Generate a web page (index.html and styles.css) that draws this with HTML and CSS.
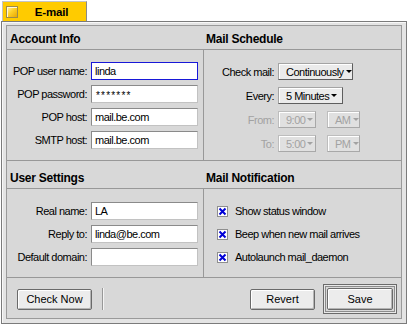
FILE: index.html
```html
<!DOCTYPE html>
<html lang="en">
<head>
    <meta charset="UTF-8">
    <title>E-mail</title>
    <link rel="stylesheet" href="styles.css">
</head>
<body>
    <div class="window">
        <!-- Title tab -->
        <div class="tab">
            <span class="close-box"></span>
            <span class="tab-title">E-mail</span>
        </div>

        <div class="frame">
            <div class="content">
                <div class="row row-top">
                    <section class="col">
                        <h2 class="col-head">Account Info</h2>
                        <div class="col-body form">
                            <label>POP user name:</label>
                            <div class="field focused">linda</div>
                            <label>POP password:</label>
                            <div class="field pw">*******</div>
                            <label>POP host:</label>
                            <div class="field">mail.be.com</div>
                            <label>SMTP host:</label>
                            <div class="field">mail.be.com</div>
                        </div>
                    </section>
                    <section class="col col-right">
                        <h2 class="col-head">Mail Schedule</h2>
                        <div class="col-body schedule">
                            <label>Check mail:</label>
                            <div class="popup w-cont">Continuously<i class="arrow"></i></div>
                            <label>Every:</label>
                            <div class="popup w-every">5 Minutes<i class="arrow"></i></div>
                            <label class="off">From:</label>
                            <div class="pair">
                                <div class="popup off w-time">9:00<i class="arrow"></i></div>
                                <div class="popup off w-ampm">AM<i class="arrow"></i></div>
                            </div>
                            <label class="off">To:</label>
                            <div class="pair">
                                <div class="popup off w-time">5:00<i class="arrow"></i></div>
                                <div class="popup off w-ampm">PM<i class="arrow"></i></div>
                            </div>
                        </div>
                    </section>
                </div>

                <div class="row row-bottom">
                    <section class="col">
                        <h2 class="col-head">User Settings</h2>
                        <div class="col-body form">
                            <label>Real name:</label>
                            <div class="field">LA</div>
                            <label>Reply to:</label>
                            <div class="field">linda@be.com</div>
                            <label>Default domain:</label>
                            <div class="field"></div>
                        </div>
                    </section>
                    <section class="col col-right">
                        <h2 class="col-head">Mail Notification</h2>
                        <div class="col-body checks">
                            <div class="check">
                                <svg width="11" height="11" viewBox="0 0 11 11"><rect x="0.5" y="0.5" width="10" height="10" fill="#fff" stroke="#8e8e8e"/><path d="M2.5 2.5L8.5 8.5M8.5 2.5L2.5 8.5" stroke="#0000d6" stroke-width="2"/></svg>
                                <span>Show status window</span>
                            </div>
                            <div class="check">
                                <svg width="11" height="11" viewBox="0 0 11 11"><rect x="0.5" y="0.5" width="10" height="10" fill="#fff" stroke="#8e8e8e"/><path d="M2.5 2.5L8.5 8.5M8.5 2.5L2.5 8.5" stroke="#0000d6" stroke-width="2"/></svg>
                                <span>Beep when new mail arrives</span>
                            </div>
                            <div class="check">
                                <svg width="11" height="11" viewBox="0 0 11 11"><rect x="0.5" y="0.5" width="10" height="10" fill="#fff" stroke="#8e8e8e"/><path d="M2.5 2.5L8.5 8.5M8.5 2.5L2.5 8.5" stroke="#0000d6" stroke-width="2"/></svg>
                                <span>Autolaunch mail_daemon</span>
                            </div>
                        </div>
                    </section>
                </div>

                <div class="actions">
                    <button class="btn w-check">Check Now</button>
                    <span class="vsep"></span>
                    <span class="spacer"></span>
                    <button class="btn w-revert">Revert</button>
                    <span class="default-ring"><span class="inner-ring"><button class="btn w-save">Save</button></span></span>
                </div>
            </div>
        </div>
    </div>
</body>
</html>
```

FILE: styles.css
```css
* {
    box-sizing: border-box;
}

body {
    margin: 0;
    background: #fff;
    font-family: "Liberation Sans", Arial, sans-serif;
    font-size: 11px;
    letter-spacing: -0.5px;
    color: #000;
}

.window {
    width: 408px;
    padding: 1px 0 0 1px;
}

/* yellow title tab */
.tab {
    display: flex;
    align-items: center;
    width: 85px;
    height: 20px;
    margin-left: 1px;
    padding-left: 3px;
    background: #ffcb00;
    border-top: 1px solid #c4c4c4;
    border-left: 1px solid #c4c4c4;
    border-right: 1px solid #8a8a8a;
}

.close-box {
    width: 12px;
    height: 12px;
    border: 1px solid #9c8b4a;
    background: linear-gradient(135deg, #fff1b0 0%, #ffd22a 45%, #e8a800 100%);
    box-shadow: inset 1px 1px 0 #fff8dc;
}

.tab-title {
    flex: 1;
    text-align: center;
    font-weight: bold;
    font-size: 11.5px;
    letter-spacing: -0.2px;
    padding-right: 1px;
}

.frame {
    width: 406px;
    height: 303px;
    border: 1px solid #7b7b7b;
    padding: 3px 4px 4px 4px;
    background: #e4e4e4;
    box-shadow: inset 1px 1px 0 #f8f8f8;
}

.content {
    height: 100%;
    border: 1px solid #9a9a9a;
    background: #d8d8d8;
    display: flex;
    flex-direction: column;
}

.row {
    display: grid;
    grid-template-columns: 196px 1fr;
    border-bottom: 1px solid #989898;
}

.row-top {
    height: 135px;
}

.row-bottom {
    height: 117px;
}

.col {
    display: flex;
    flex-direction: column;
}

.col-head {
    margin: 0;
    padding: 6px 0 0 3px;
    height: 24px;
    border-bottom: 1px solid #989898;
    font-size: 12px;
    line-height: 14px;
    font-weight: bold;
    letter-spacing: -0.25px;
}

.row-bottom .col-head {
    height: 28px;
    padding-top: 10px;
}

.col-body {
    flex: 1;
}

.col-right .col-body {
    border-left: 1px solid #989898;
}

/* label + text field grids */
.form {
    display: grid;
    grid-template-columns: 80px 107px;
    grid-auto-rows: 18px;
    column-gap: 4px;
    row-gap: 5px;
    align-items: center;
    padding-top: 12px;
}

.row-bottom .form {
    padding-top: 13px;
}

.form label,
.schedule label {
    text-align: right;
}

.field {
    height: 18px;
    background: #fff;
    border: 1px solid;
    border-color: #8a8a8a #c2c2c2 #c2c2c2 #8a8a8a;
    padding-left: 3px;
    line-height: 16px;
    white-space: nowrap;
}

.field.focused {
    border-color: #1818d8;
}

.field.pw {
    line-height: 20px;
    letter-spacing: 1.2px;
    font-size: 10px;
    padding-left: 4px;
}

/* popup menus */
.schedule {
    display: grid;
    grid-template-columns: 70px auto;
    grid-auto-rows: 17px;
    column-gap: 4px;
    row-gap: 7px;
    align-items: center;
    padding-top: 13px;
}

.pair {
    display: flex;
    gap: 11px;
}

.popup {
    display: flex;
    align-items: center;
    height: 17px;
    padding-left: 7px;
    background: #ebebeb;
    border: 1px solid;
    border-color: #a4a4a4 #5e5e5e #5e5e5e #a4a4a4;
    box-shadow: inset 1px 1px 0 #fff;
    white-space: nowrap;
}

.arrow {
    width: 0;
    height: 0;
    margin-left: 2px;
    border-left: 3px solid transparent;
    border-right: 3px solid transparent;
    border-top: 3px solid #000;
}

.w-cont { width: 75px; }
.w-every { width: 65px; }
.w-time { width: 38px; }
.w-ampm { width: 33px; }

.off {
    color: #a2a2a2;
}

.popup.off {
    border-color: #bdbdbd #a8a8a8 #a8a8a8 #bdbdbd;
    background: #e0e0e0;
}

.popup.off .arrow {
    border-top-color: #a2a2a2;
}

/* checkboxes */
.checks {
    display: flex;
    flex-direction: column;
    gap: 5px;
    padding: 13px 0 0 13px;
}

.check {
    display: flex;
    align-items: center;
    gap: 7px;
    height: 18px;
}

/* bottom buttons */
.actions {
    flex: 1;
    display: flex;
    align-items: center;
    padding: 2px 4px 0 10px;
}

.btn {
    height: 21px;
    padding: 0;
    font: inherit;
    color: #000;
    background: #ececec;
    border: 1px solid #6a6a6a;
    border-radius: 2px;
    box-shadow: inset 1px 1px 0 #fff, inset -1px -1px 0 #b4b4b4;
}

.w-check { width: 75px; }
.w-revert { width: 65px; }
.w-save { width: 66px; height: 22px; display: block; }

.vsep {
    width: 2px;
    height: 22px;
    margin-left: 10px;
    border-left: 1px solid #989898;
    border-right: 1px solid #f4f4f4;
}

.spacer {
    flex: 1;
}

.default-ring {
    margin-left: 8px;
    padding: 1px;
    border: 1px solid #6a6a6a;
    background: #e8e8e8;
}

.inner-ring {
    display: block;
    padding: 1px;
    border: 1px solid #8c8c8c;
    background: #d8d8d8;
}
```
